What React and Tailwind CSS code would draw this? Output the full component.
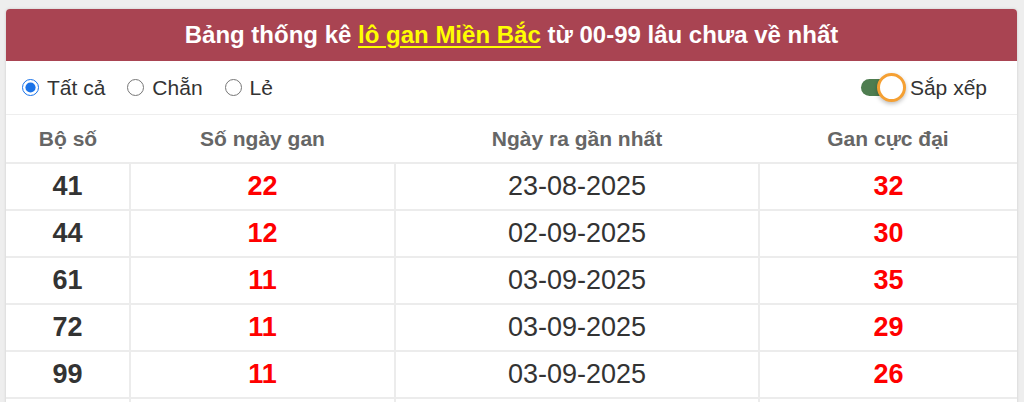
import { useState } from 'react';

const rows = [
  { bo: '41', gan: 22, date: '23-08-2025', max: 32 },
  { bo: '44', gan: 12, date: '02-09-2025', max: 30 },
  { bo: '61', gan: 11, date: '03-09-2025', max: 35 },
  { bo: '72', gan: 11, date: '03-09-2025', max: 29 },
  { bo: '99', gan: 11, date: '03-09-2025', max: 26 },
];

const filters = [
  { key: 'all', label: 'Tất cả' },
  { key: 'even', label: 'Chẵn' },
  { key: 'odd', label: 'Lẻ' },
];

export default function App() {
  const [filter, setFilter] = useState('all');
  const [sorted, setSorted] = useState(true);

  return (
    <div className="h-[402px] overflow-hidden bg-[#eeeeee] pt-[9px] pl-[6px] font-['Liberation_Sans',Arial,sans-serif]">
      <div className="w-[1011px] bg-white rounded-t-[4px] shadow-[0_0_3px_rgba(0,0,0,0.15)] overflow-hidden">
        {/* Header */}
        <div className="h-[52px] bg-[#a94452] flex items-center justify-center text-white font-bold text-[24px]">
          <span>
            Bảng thống kê{' '}
            <a href="#" className="text-[#ffff00] underline underline-offset-[3px]">lô gan Miền Bắc</a>{' '}
            từ 00-99 lâu chưa về nhất
          </span>
        </div>

        {/* Filters */}
        <div className="h-[54px] flex items-center justify-between pl-[16px] pr-[30px] border-b border-[#eeeeee]">
          <div className="flex items-center gap-[22px] text-[21px] text-[#333]">
            {filters.map(f => (
              <label key={f.key} className="flex items-center gap-[8px] cursor-pointer">
                <input
                  type="radio"
                  name="filter"
                  checked={filter === f.key}
                  onChange={() => setFilter(f.key)}
                  className="w-[17px] h-[17px] m-0 accent-[#1a73e8]"
                />
                {f.label}
              </label>
            ))}
          </div>
          <label className="flex items-center gap-[4px] text-[21px] text-[#333] cursor-pointer" onClick={() => setSorted(s => !s)}>
            <span className="relative w-[45px] h-[29px] flex items-center">
              <span className={`block w-[30px] h-[17px] rounded-full ${sorted ? 'bg-[#4e7d50]' : 'bg-gray-300'}`} />
              <span className={`absolute top-0 ${sorted ? 'left-[16px]' : 'left-0'} w-[29px] h-[29px] rounded-full bg-white border-[3px] border-[#f5a033] shadow-[0_2px_4px_rgba(0,0,0,0.25)]`} />
            </span>
            <span>Sắp xếp</span>
          </label>
        </div>

        {/* Table */}
        <table className="w-full border-collapse">
          <colgroup>
            <col className="w-[124px]" />
            <col className="w-[265px]" />
            <col className="w-[364px]" />
            <col className="w-[258px]" />
          </colgroup>
          <thead>
            <tr className="h-[48px] text-[21px] text-[#666]">
              <th className="font-bold">Bộ số</th>
              <th className="font-bold">Số ngày gan</th>
              <th className="font-bold">Ngày ra gần nhất</th>
              <th className="font-bold">Gan cực đại</th>
            </tr>
          </thead>
          <tbody>
            {rows.map(r => (
              <tr key={r.bo} className="h-[47px] text-[27px] border-t-2 border-[#ececec]">
                <td className="text-center font-bold text-[#333]">{r.bo}</td>
                <td className="text-center font-bold text-[#ff0000] border-l-2 border-[#ececec]">{r.gan}</td>
                <td className="text-center text-[#333] border-l-2 border-[#ececec]">{r.date}</td>
                <td className="text-center font-bold text-[#ff0000] border-l-2 border-[#ececec]">{r.max}</td>
              </tr>
            ))}
            <tr className="h-[47px] border-t-2 border-[#ececec]">
              <td />
              <td className="border-l-2 border-[#ececec]" />
              <td className="border-l-2 border-[#ececec]" />
              <td className="border-l-2 border-[#ececec]" />
            </tr>
          </tbody>
        </table>
      </div>
    </div>
  );
}
